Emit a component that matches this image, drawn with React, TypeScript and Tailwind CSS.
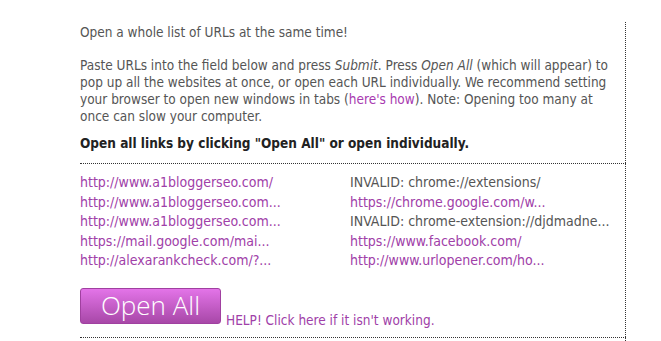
import React from 'react';

const left = [
  'http://www.a1bloggerseo.com/',
  'http://www.a1bloggerseo.com...',
  'http://www.a1bloggerseo.com...',
  'https://mail.google.com/mai...',
  'http://alexarankcheck.com/?...',
];

const right: { text: string; invalid?: boolean }[] = [
  { text: 'INVALID: chrome://extensions/', invalid: true },
  { text: 'https://chrome.google.com/w...' },
  { text: 'INVALID: chrome-extension://djdmadne...', invalid: true },
  { text: 'https://www.facebook.com/' },
  { text: 'http://www.urlopener.com/ho...' },
];

export default function App() {
  return (
    <div
      className="w-[661px] h-[341px] bg-white overflow-hidden text-[13px] text-[#555]"
      style={{ fontFamily: '"DejaVu Sans Condensed", "DejaVu Sans", sans-serif' }}
    >
      {/* intro */}
      <div className="ml-[80px] w-[546px] mt-[22px] border-r border-dotted border-[#333] pb-[11px] text-[13.5px] whitespace-nowrap">
        <p className="pt-[2px] leading-[17px]">Open a whole list of URLs at the same time!</p>
        <p className="mt-[16px] leading-[17px]">
          Paste URLs into the field below and press <i>Submit</i>. Press <i>Open All</i> (which will appear) to
          <br />
          pop up all the websites at once, or open each URL individually. We recommend setting
          <br />
          your browser to open new windows in tabs (<span className="text-[#a83ab0]">here's how</span>). Note: Opening too many at
          <br />
          once can slow your computer.
        </p>
        <p className="mt-[10px] leading-[17px] font-bold text-[#222]">
          Open all links by clicking "Open All" or open individually.
        </p>
      </div>

      {/* links */}
      <div className="ml-[80px] w-[546px] border-t border-r border-dotted border-[#333] pt-[9px] pb-[13px]">
        <div className="grid grid-cols-[270px_1fr] leading-[19.6px] text-[14px]">
          <div className="flex flex-col">
            {left.map((t, i) => (
              <span key={i} className="text-[#a040a8] whitespace-nowrap">{t}</span>
            ))}
          </div>
          <div className="flex flex-col">
            {right.map((r, i) => (
              <span key={i} className={`whitespace-nowrap ${r.invalid ? 'text-[#555]' : 'text-[#a040a8]'}`}>{r.text}</span>
            ))}
          </div>
        </div>
        <div className="flex items-end mt-[17px]">
          <button
            type="button"
            className="w-[141px] h-[36px] rounded-[3px] border border-[#a040a0] bg-gradient-to-b from-[#e374e8] to-[#a848a8] text-white text-[26px] font-light leading-none pb-[2px]"
            style={{ fontFamily: '"Open Sans", "Liberation Sans", sans-serif' }}
          >
            Open All
          </button>
          <span className="ml-[5px] mb-[-4px] text-[13.5px] text-[#a040a8] leading-[15px]">HELP! Click here if it isn't working.</span>
        </div>
      </div>
      <div className="ml-[80px] w-[546px] border-t border-r border-dotted border-[#333] h-[10px]" />
    </div>
  );
}
